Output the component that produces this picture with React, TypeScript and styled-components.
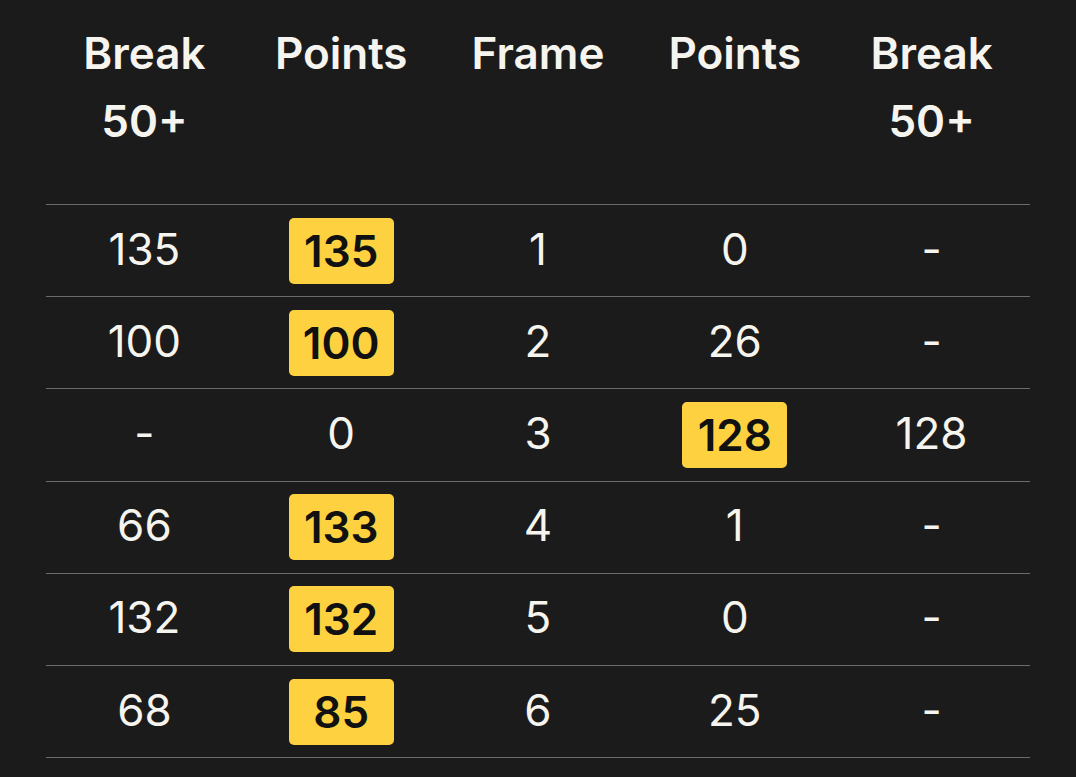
import React from 'react';
import styled, { createGlobalStyle } from 'styled-components';

const GlobalStyle = createGlobalStyle`
  html, body {
    margin: 0;
    padding: 0;
    background: #1b1b1b;
  }
  body {
    font-family: Inter, "Liberation Sans", sans-serif;
    color: #f6f4ee;
  }
`;

const Page = styled.div`
  padding: 19px 46px 0;
`;

const Table = styled.table`
  width: 100%;
  border-collapse: collapse;
  table-layout: fixed;
`;

const HeadCell = styled.th`
  font-size: 44px;
  font-weight: 600;
  line-height: 68px;
  text-align: center;
  vertical-align: top;
  padding: 0 0 49px;
  border-bottom: 1px solid #6b6b6b;
`;

const Row = styled.tr`
  border-bottom: 1px solid #6b6b6b;
`;

const Cell = styled.td`
  height: 87.2px;
  padding: 0 0 4px;
  text-align: center;
  vertical-align: middle;
  font-size: 44px;
  font-weight: 400;
`;

const Badge = styled.span`
  display: inline-flex;
  align-items: center;
  justify-content: center;
  width: 105px;
  height: 66px;
  margin-top: 4px;
  border-radius: 5px;
  background: #fdd13f;
  color: #111;
  font-weight: 600;
  vertical-align: middle;
`;

type Side = { brk: string; pts: string; won: boolean };
type Frame = { n: number; left: Side; right: Side };

const frames: Frame[] = [
  { n: 1, left: { brk: '135', pts: '135', won: true }, right: { brk: '-', pts: '0', won: false } },
  { n: 2, left: { brk: '100', pts: '100', won: true }, right: { brk: '-', pts: '26', won: false } },
  { n: 3, left: { brk: '-', pts: '0', won: false }, right: { brk: '128', pts: '128', won: true } },
  { n: 4, left: { brk: '66', pts: '133', won: true }, right: { brk: '-', pts: '1', won: false } },
  { n: 5, left: { brk: '132', pts: '132', won: true }, right: { brk: '-', pts: '0', won: false } },
  { n: 6, left: { brk: '68', pts: '85', won: true }, right: { brk: '-', pts: '25', won: false } },
];

const Points = ({ side }: { side: Side }) =>
  side.won ? <Badge>{side.pts}</Badge> : <>{side.pts}</>;

export default function App() {
  return (
    <Page>
      <GlobalStyle />
      <Table>
        <thead>
          <tr>
            <HeadCell>Break<br />50+</HeadCell>
            <HeadCell>Points</HeadCell>
            <HeadCell>Frame</HeadCell>
            <HeadCell>Points</HeadCell>
            <HeadCell>Break<br />50+</HeadCell>
          </tr>
        </thead>
        <tbody>
          {frames.map((f) => (
            <Row key={f.n}>
              <Cell>{f.left.brk}</Cell>
              <Cell><Points side={f.left} /></Cell>
              <Cell>{f.n}</Cell>
              <Cell><Points side={f.right} /></Cell>
              <Cell>{f.right.brk}</Cell>
            </Row>
          ))}
        </tbody>
      </Table>
    </Page>
  );
}
